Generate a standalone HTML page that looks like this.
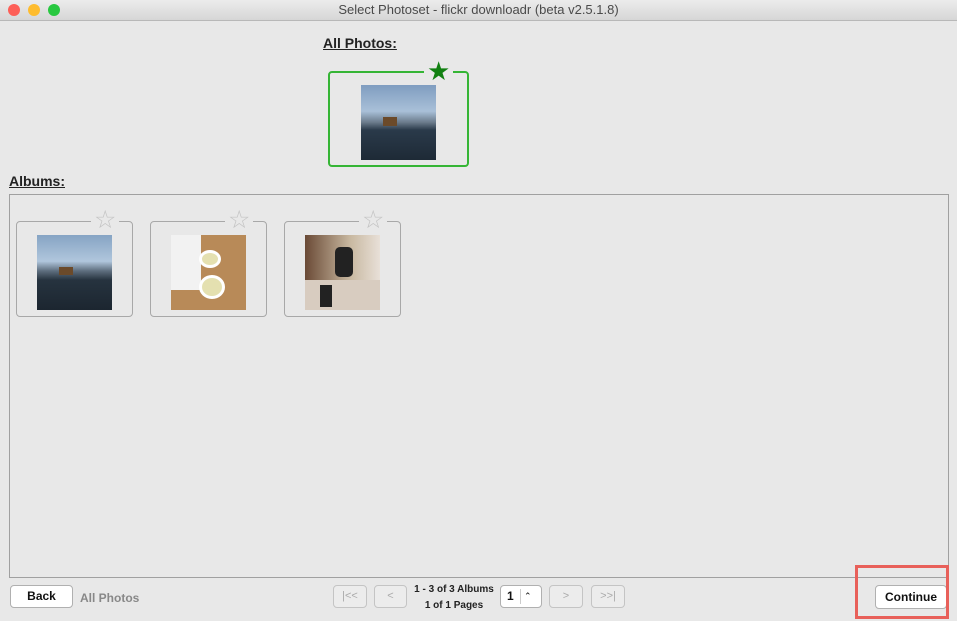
<!DOCTYPE html>
<html><head><style>
*{margin:0;padding:0;box-sizing:border-box}
body{width:957px;height:621px;background:#e8e8e8;font-family:"Liberation Sans",sans-serif;position:relative;overflow:hidden}
.a{position:absolute}
.tb{left:0;top:0;width:957px;height:21px;background:linear-gradient(#ececec,#d6d6d6);border-bottom:1px solid #b8b8b8;text-align:center;font-size:13px;color:#4a4a4a;line-height:20px}
.dot{top:4px;width:12px;height:12px;border-radius:50%}
.lbl{font-weight:bold;font-size:14px;text-decoration:underline;color:#222}
.card{border:1px solid #a8a8a8;border-radius:4px}
.star{font-size:25px;line-height:24px;color:#c4c4c4;background:#e8e8e8;padding:0 3px}
.btn{background:#fff;border:1px solid #b0b0b0;border-radius:4px;font-size:12px;font-weight:bold;text-align:center;color:#111}
.dis{background:#ececec;border:1px solid #c4c4c4;border-radius:4px;color:#aaa;font-size:11px;text-align:center;line-height:21px}
</style></head><body>
<div class="a tb">Select Photoset - flickr downloadr (beta v2.5.1.8)</div>
<div class="a dot" style="left:8px;background:#fd5f57"></div>
<div class="a dot" style="left:28px;background:#febc2e"></div>
<div class="a dot" style="left:48px;background:#28c840"></div>

<div class="a lbl" style="left:323px;top:35px">All Photos:</div>
<div class="a" style="left:328px;top:71px;width:141px;height:96px;border:2px solid #35b535;border-radius:4px"></div>
<div class="a" style="left:424px;top:58px;font-size:26px;color:#118011;background:#e8e8e8;padding:0 3px;line-height:26px">★</div>
<div class="a" style="left:361px;top:85px;width:75px;height:75px;background:linear-gradient(#7f9dc0 0%,#a9c0d8 35%,#6a7a8a 50%,#2a3a4a 60%,#1e2a36 100%)"><div class="a" style="left:22px;top:32px;width:14px;height:9px;background:#6b4a2a"></div></div>

<div class="a lbl" style="left:9px;top:173px">Albums:</div>
<div class="a" style="left:9px;top:194px;width:940px;height:384px;border:1px solid #a0a0a0"></div>

<div class="a card" style="left:16px;top:221px;width:117px;height:96px"></div>
<div class="a star" style="left:91px;top:208px">☆</div>
<div class="a" style="left:37px;top:235px;width:75px;height:75px;background:linear-gradient(#86a4c4 0%,#b0c6dc 35%,#5d6d7d 48%,#26333f 60%,#1c2630 100%)"><div class="a" style="left:22px;top:32px;width:14px;height:8px;background:#6b4a2a"></div></div>

<div class="a card" style="left:150px;top:221px;width:117px;height:96px"></div>
<div class="a star" style="left:225px;top:208px">☆</div>
<div class="a" style="left:171px;top:235px;width:75px;height:75px;background:#b88a58;overflow:hidden"><div class="a" style="left:0;top:0;width:30px;height:55px;background:#f2f2f2"></div><div class="a" style="left:28px;top:15px;width:22px;height:18px;border-radius:50%;background:#e4e0b0;border:3px solid #fff"></div><div class="a" style="left:28px;top:40px;width:26px;height:24px;border-radius:50%;background:#e4e0b0;border:3px solid #fff"></div></div>

<div class="a card" style="left:284px;top:221px;width:117px;height:96px"></div>
<div class="a star" style="left:359px;top:208px">☆</div>
<div class="a" style="left:305px;top:235px;width:75px;height:75px;background:linear-gradient(90deg,#6a4a36,#c8b8a0 60%,#e8e0d8);overflow:hidden"><div class="a" style="left:0;top:45px;width:75px;height:30px;background:#d8ccc0"></div><div class="a" style="left:30px;top:12px;width:18px;height:30px;background:#222;border-radius:5px"></div><div class="a" style="left:15px;top:50px;width:12px;height:22px;background:#222"></div></div>

<div class="a btn" style="left:10px;top:585px;width:63px;height:23px;line-height:21px">Back</div>
<div class="a" style="left:80px;top:591px;font-size:12px;font-weight:bold;color:#888">All Photos</div>

<div class="a dis" style="left:333px;top:585px;width:34px;height:23px">|&lt;&lt;</div>
<div class="a dis" style="left:374px;top:585px;width:33px;height:23px">&lt;</div>
<div class="a" style="left:410px;top:582px;width:88px;text-align:center;font-size:10px;font-weight:bold;line-height:16px;color:#222">1 - 3 of 3 Albums<br>1 of 1 Pages</div>
<div class="a btn" style="left:500px;top:585px;width:42px;height:23px;line-height:21px;text-align:left;padding-left:6px">1<span style="position:absolute;left:19px;top:3px;height:15px;border-left:1px solid #ccc"></span><span style="position:absolute;left:23px;top:0;font-size:9px;font-weight:normal">⌃</span></div>
<div class="a dis" style="left:549px;top:585px;width:34px;height:23px">&gt;</div>
<div class="a dis" style="left:591px;top:585px;width:34px;height:23px">&gt;&gt;|</div>

<div class="a btn" style="left:875px;top:585px;width:72px;height:24px;line-height:22px">Continue</div>
<div class="a" style="left:855px;top:565px;width:94px;height:54px;border:3px solid #e8605a"></div>
</body></html>
